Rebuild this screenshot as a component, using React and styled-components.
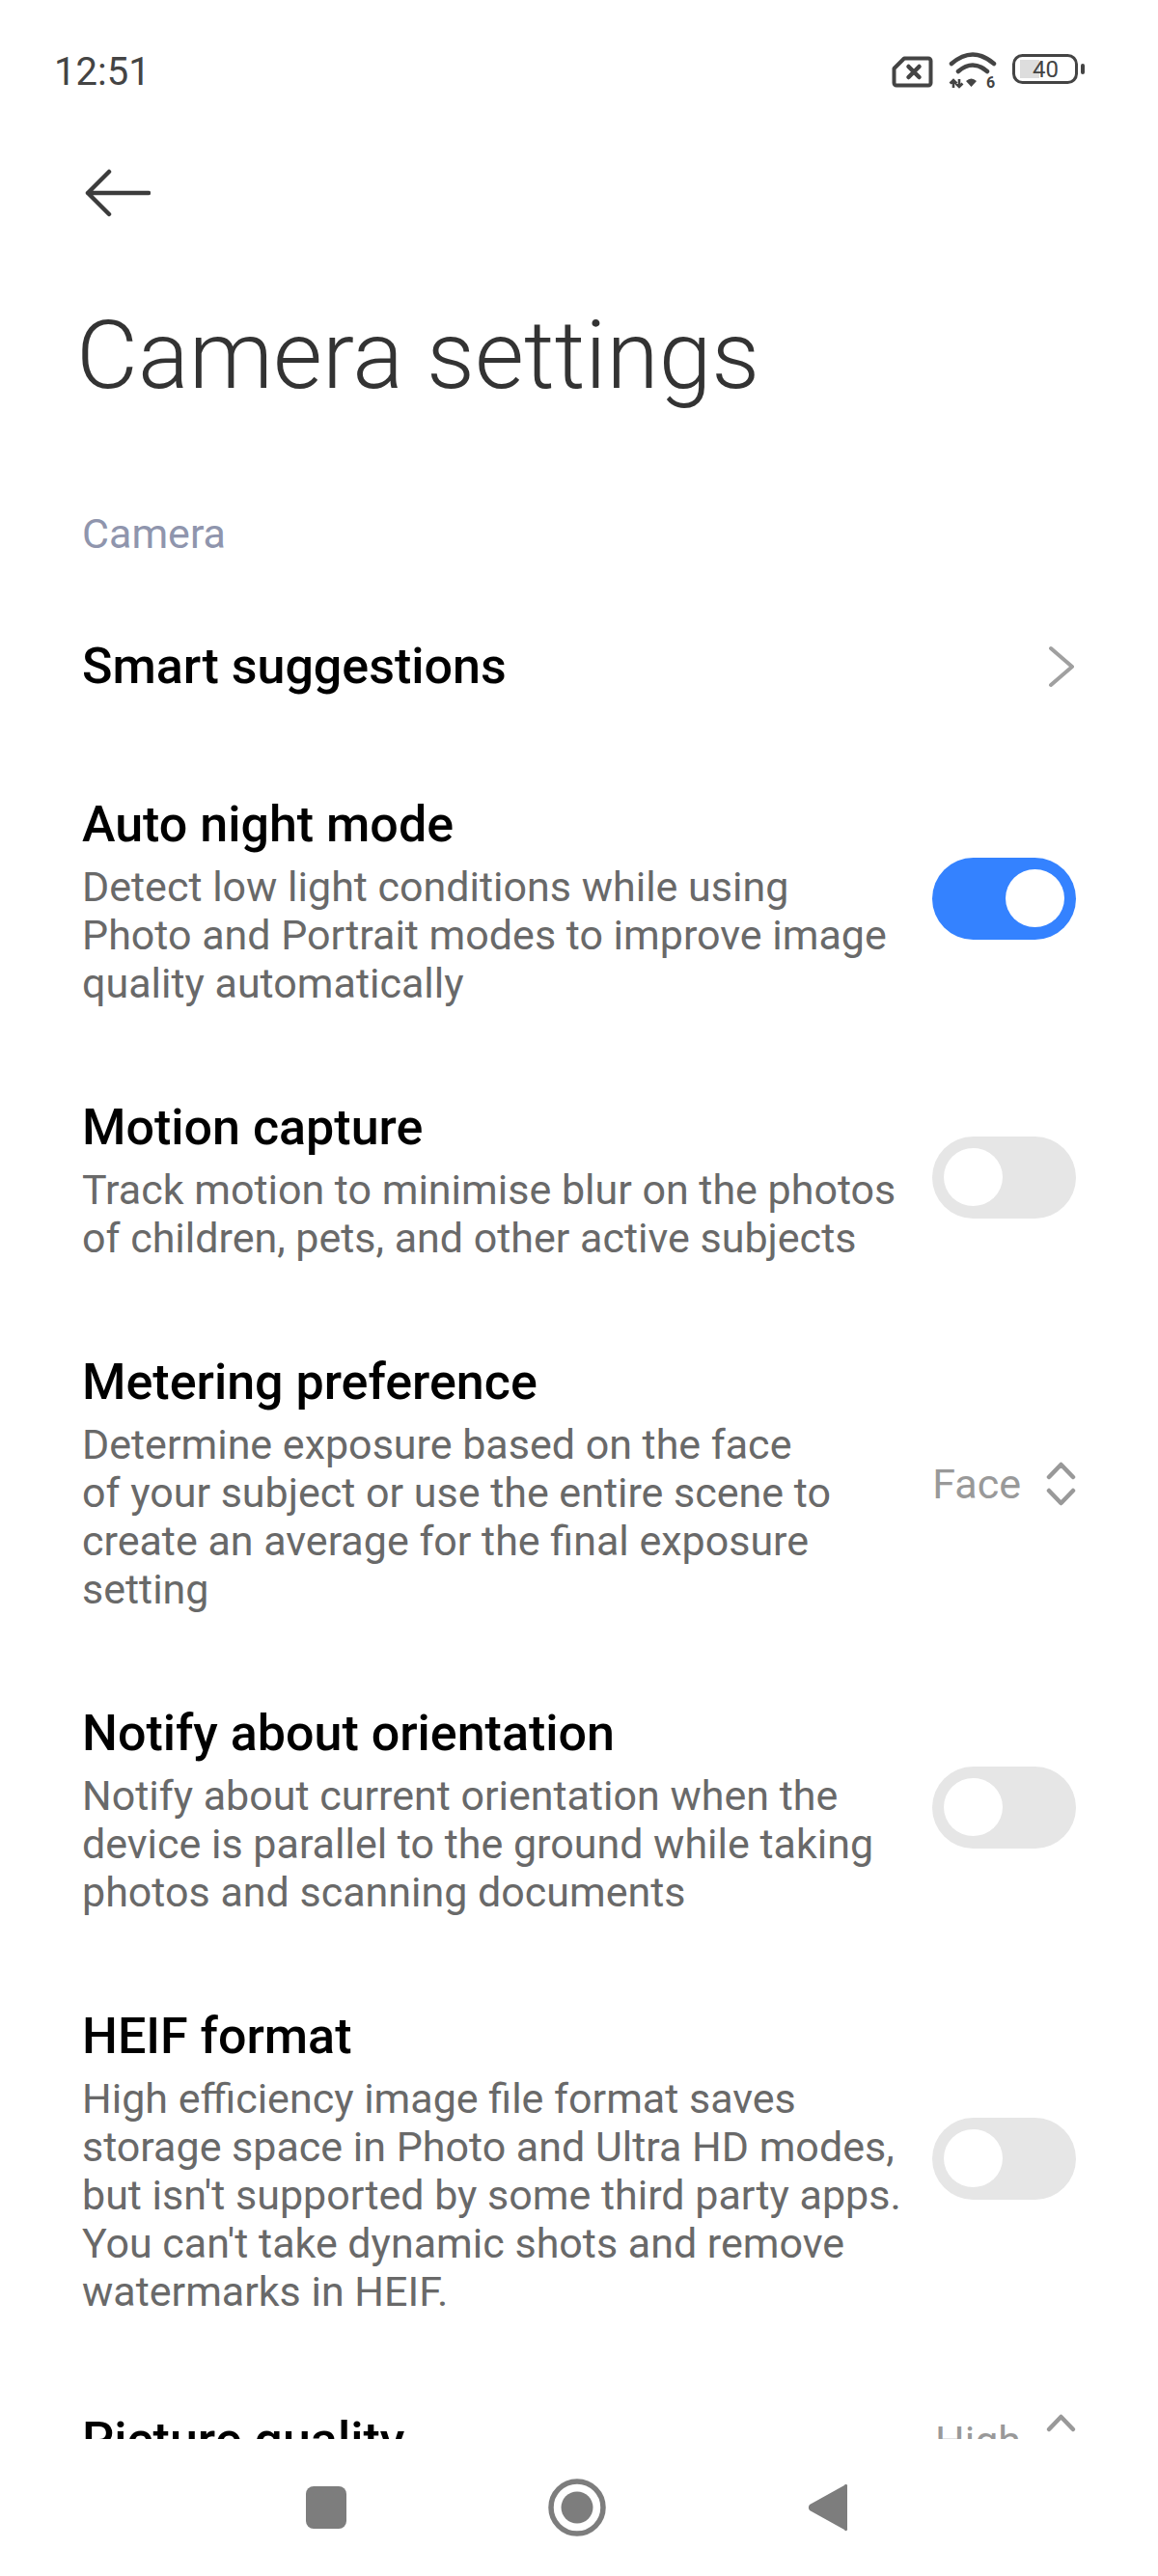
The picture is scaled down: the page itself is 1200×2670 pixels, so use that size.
import React from 'react'
import styled, { createGlobalStyle } from 'styled-components'

const Global = createGlobalStyle`
  html, body { margin: 0; padding: 0; background: #fff; }
  body { font-family: Roboto, "Noto Sans", sans-serif; }
`

const Page = styled.div`
  width: 1200px;
  height: 2670px;
  display: flex;
  flex-direction: column;
  overflow: hidden;
  background: #fff;
`
const StatusBar = styled.div`
  height: 148px;
  padding: 0 76px 0 56px;
  display: flex;
  align-items: center;
  justify-content: space-between;
  font-size: 40px;
  color: #444;
  flex: none;
  box-sizing: border-box;
`
const Status = styled.div`
  display: flex;
  align-items: center;
  gap: 16px;
`
const BatterySvg = styled.svg`
  margin-bottom: 5px;
`
const Back = styled.div`
  height: 104px;
  padding-left: 88px;
  display: flex;
  align-items: center;
  flex: none;
`
const Title = styled.h1`
  margin: 0;
  padding: 57px 0 0 79px;
  font-size: 98.5px;
  line-height: 120px;
  font-weight: 300;
  color: #333;
  flex: none;
`
const Scroll = styled.div`
  flex: 1;
  min-height: 0;
  overflow: hidden;
`
const Section = styled.div`
  padding: 94px 0 0 85px;
  font-size: 43px;
  line-height: 60px;
  color: #8f95ad;
`
const Row = styled.div`
  display: flex;
  align-items: center;
  justify-content: space-between;
  padding: 0 85px;
  margin-top: ${p => p.$top}px;
`
const Text = styled.div`
  width: ${p => p.$w}px;
`
const Name = styled.div`
  font-size: 52px;
  font-weight: 500;
  line-height: 60px;
  color: #000;
`
const Desc = styled.div`
  margin-top: 9px;
  font-size: 43px;
  line-height: 50px;
  color: #696969;
`
const Track = styled.div`
  width: 149px;
  height: 85px;
  margin-bottom: 7px;
  padding: 0 12px;
  box-sizing: border-box;
  border-radius: 43px;
  background: ${p => (p.$on ? '#3482ff' : '#e6e6e6')};
  display: flex;
  align-items: center;
  justify-content: ${p => (p.$on ? 'flex-end' : 'flex-start')};
`
const Knob = styled.div`
  width: 61px;
  height: 60px;
  border-radius: 50%;
  background: #fff;
`
const Value = styled.div`
  display: flex;
  align-items: center;
  gap: 25px;
  margin-right: -1px;
  font-size: 43px;
  color: #999;
`
const ChevronSvg = styled.svg`
  margin-right: 2px;
`
const UpSvg = styled.svg`
  margin-bottom: 10px;
`
const Nav = styled.div`
  height: 142px;
  padding-right: 5px;
  flex: none;
  display: grid;
  grid-template-columns: repeat(3, 260px);
  justify-content: center;
  align-items: center;
  justify-items: center;
  background: #fff;
`

const Toggle = ({ on }) => <Track $on={on}><Knob /></Track>

const SimIcon = () => (
  <svg width="43" height="33" viewBox="0 0 43 33">
    <path d="M13 2.5H38a2.5 2.5 0 0 1 2.5 2.5V28a2.5 2.5 0 0 1-2.5 2.5H5A2.5 2.5 0 0 1 2.5 28V13z" fill="none" stroke="#444" strokeWidth="4" strokeLinejoin="round" />
    <path d="M17.5 11l11 11M28.5 11l-11 11" stroke="#444" strokeWidth="4.5" strokeLinecap="round" />
  </svg>
)

const WifiIcon = () => (
  <svg width="50" height="42" viewBox="0 0 50 42">
    <path d="M3 13Q25-6 47 13M10 21Q25 8 40 21" fill="none" stroke="#444" strokeWidth="4.5" strokeLinecap="round" />
    <path d="M18 31Q23.5 26 29 31L23.5 37z" fill="#444" />
    <path d="M5 38V30M1.5 33.5L5 30l3.5 3.5M11 29v8M7.5 33.5L11 37l3.5-3.5" fill="none" stroke="#444" strokeWidth="2.6" />
    <text x="39" y="38" fontFamily="Roboto" fontSize="16" fontWeight="700" fill="#444">6</text>
  </svg>
)

const BatteryIcon = () => (
  <BatterySvg width="75" height="31" viewBox="0 0 75 31">
    <rect x="8" y="6" width="20" height="19" fill="#ddd" />
    <rect x="1.5" y="1.5" width="65" height="28" rx="9" fill="none" stroke="#444" strokeWidth="3" />
    <text x="34.5" y="24" fontFamily="Roboto" fontSize="24" textAnchor="middle" fill="#444">40</text>
    <rect x="71" y="10" width="4" height="11" rx="2" fill="#444" />
  </BatterySvg>
)

const BackArrow = () => (
  <svg width="68" height="50" viewBox="0 0 68 50">
    <path d="M66 25H3M25 3L3 25l22 22" fill="none" stroke="#3c3c3c" strokeWidth="4.5" strokeLinecap="round" strokeLinejoin="round" />
  </svg>
)

const Chevron = () => (
  <ChevronSvg width="28" height="44" viewBox="0 0 28 44">
    <path d="M4 3l22 19L4 41" fill="none" stroke="#a0a0a0" strokeWidth="4" strokeLinecap="round" strokeLinejoin="round" />
  </ChevronSvg>
)

const UpDown = () => (
  <svg width="33" height="50" viewBox="0 0 33 50">
    <path d="M4 18L16.5 5 29 18M4 32l12.5 13L29 32" fill="none" stroke="#999" strokeWidth="4.5" strokeLinecap="round" strokeLinejoin="round" />
  </svg>
)

const Up = () => (
  <UpSvg width="33" height="50" viewBox="0 0 33 50">
    <path d="M4 18L16.5 5 29 18" fill="none" stroke="#999" strokeWidth="4.5" strokeLinecap="round" strokeLinejoin="round" />
  </UpSvg>
)

export default function App() {
  return (
    <Page>
      <Global />
      <StatusBar>
        <span>12:51</span>
        <Status>
          <SimIcon />
          <WifiIcon />
          <BatteryIcon />
        </Status>
      </StatusBar>
      <Back><BackArrow /></Back>
      <Title>Camera settings</Title>
      <Scroll>
        <Section>Camera</Section>
        <Row $top={78}><Name>Smart suggestions</Name><Chevron /></Row>
        <Row $top={104}>
          <Text $w={852}>
            <Name>Auto night mode</Name>
            <Desc>Detect low light conditions while using Photo and Portrait modes to improve image quality automatically</Desc>
          </Text>
          <Toggle on />
        </Row>
        <Row $top={95}>
          <Text $w={852}>
            <Name>Motion capture</Name>
            <Desc>Track motion to minimise blur on the photos of children, pets, and other active subjects</Desc>
          </Text>
          <Toggle />
        </Row>
        <Row $top={95}>
          <Text $w={780}>
            <Name>Metering preference</Name>
            <Desc>Determine exposure based on the face of your subject or use the entire scene to create an average for the final exposure setting</Desc>
          </Text>
          <Value>Face<UpDown /></Value>
        </Row>
        <Row $top={95}>
          <Text $w={852}>
            <Name>Notify about orientation</Name>
            <Desc>Notify about current orientation when the device is parallel to the ground while taking photos and scanning documents</Desc>
          </Text>
          <Toggle />
        </Row>
        <Row $top={95}>
          <Text $w={852}>
            <Name>HEIF format</Name>
            <Desc>High efficiency image file format saves storage space in Photo and Ultra HD modes, but isn't supported by some third party apps. You can't take dynamic shots and remove watermarks in HEIF.</Desc>
          </Text>
          <Toggle />
        </Row>
        <Row $top={100}>
          <Name>Picture quality</Name>
          <Value>High<Up /></Value>
        </Row>
      </Scroll>
      <Nav>
        <svg width="42" height="44" viewBox="0 0 42 44"><rect width="42" height="44" rx="8" fill="#7d7d7d" /></svg>
        <svg width="60" height="60" viewBox="0 0 60 60"><circle cx="30" cy="30" r="27" fill="none" stroke="#7d7d7d" strokeWidth="5.5" /><circle cx="30" cy="30" r="16.5" fill="#7d7d7d" /></svg>
        <svg width="42" height="50" viewBox="0 0 42 50"><path d="M41 3a1.5 1.5 0 0 0-3-1L2 22a5 5 0 0 0 0 6l36 20a1.5 1.5 0 0 0 3-1z" fill="#7d7d7d" /></svg>
      </Nav>
    </Page>
  )
}
